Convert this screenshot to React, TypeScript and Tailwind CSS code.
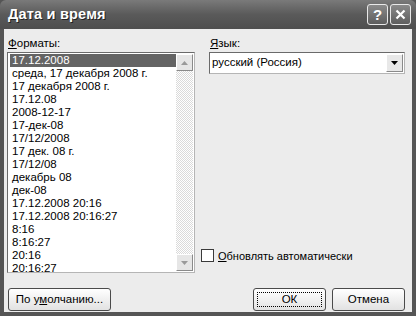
import React from "react";

const FORMATS = [
  "17.12.2008",
  "среда, 17 декабря 2008 г.",
  "17 декабря 2008 г.",
  "17.12.08",
  "2008-12-17",
  "17-дек-08",
  "17/12/2008",
  "17 дек. 08 г.",
  "17/12/08",
  "декабрь 08",
  "дек-08",
  "17.12.2008 20:16",
  "17.12.2008 20:16:27",
  "8:16",
  "8:16:27",
  "20:16",
  "20:16:27",
];

function ScrollButton({ up }: { up?: boolean }) {
  return (
    <div className="h-[17px] w-[17px] shrink-0 flex items-center justify-center bg-[#e6e6e6] border border-t-white border-l-white border-b-[#8a8a8a] border-r-[#8a8a8a]">
      <svg width="7" height="4" viewBox="0 0 7 4">
        <path d={up ? "M0 4 L3.5 0 L7 4 Z" : "M0 0 L3.5 4 L7 0 Z"} fill="#9a9a9a" />
      </svg>
    </div>
  );
}

function Button({
  children,
  width,
  focused,
}: {
  children: React.ReactNode;
  width: string;
  focused?: boolean;
}) {
  return (
    <div
      className={`${width} h-[23px] rounded-[3px] border border-[#4a4a4a] bg-gradient-to-b from-white to-[#e2e2e2] flex items-center justify-center p-[3px] text-[11.5px]`}
    >
      <div
        className={`w-full h-full flex items-center justify-center ${
          focused ? "border border-dotted border-black" : ""
        }`}
      >
        {children}
      </div>
    </div>
  );
}

export default function App() {
  return (
    <div
      className="w-[416px] h-[316px] flex flex-col bg-[#555555] text-[11.5px] text-black"
      style={{ fontFamily: '"Liberation Sans", Arial, sans-serif' }}
    >
      {/* Title bar */}
      <div className="h-[29px] shrink-0 flex items-center justify-between pl-[8px] pr-[5px] bg-gradient-to-b from-[#7a7a7a] via-[#5a5a5a] to-[#4e4e4e] rounded-t-[6px]">
        <span className="text-white font-bold text-[14.5px] tracking-[0.2px] [text-shadow:1px_1px_0_#222]">
          Дата и время
        </span>
        <div className="flex gap-[2px]">
          <div className="w-[21px] h-[21px] rounded-[3px] border border-[#e8e8e8] bg-gradient-to-b from-[#8a8a8a] to-[#5e5e5e] flex items-center justify-center text-white font-bold text-[15px] leading-none">
            ?
          </div>
          <div className="w-[21px] h-[21px] rounded-[3px] border border-[#e8e8e8] bg-gradient-to-b from-[#8a8a8a] to-[#5e5e5e] flex items-center justify-center">
            <svg width="11" height="11" viewBox="0 0 11 11">
              <path d="M1.5 1.5 L9.5 9.5 M9.5 1.5 L1.5 9.5" stroke="white" strokeWidth="2.2" />
            </svg>
          </div>
        </div>
      </div>

      {/* Body */}
      <div className="flex-1 mx-[4px] mb-[4px] bg-[#ececec] flex flex-col pt-[8px] pl-[3px] pr-[7px]">
        <div className="flex gap-[6px] h-[236px]">
          {/* Left: formats */}
          <div className="w-[188px] flex flex-col">
            <div className="h-[13px] leading-[13px] pl-[1px] mb-[2px]">
              <span className="underline">Ф</span>орматы:
            </div>
            <div className="h-[221px] flex border border-t-[#6a6a6a] border-l-[#6a6a6a] border-b-[#b5b5b5] border-r-[#b5b5b5] bg-white p-[1px]">
              <div className="flex-1 flex flex-col pl-[1px]">
                {FORMATS.map((f, i) => (
                  <div
                    key={f}
                    className={`h-[13px] leading-[13px] pl-[2px] whitespace-nowrap ${
                      i === 0 ? "bg-[#646464] text-white" : ""
                    }`}
                  >
                    {f}
                  </div>
                ))}
              </div>
              <div className="w-[17px] flex flex-col bg-[repeating-conic-gradient(#ffffff_0_25%,#dadada_0_50%)] bg-[length:2px_2px]">
                <ScrollButton up />
                <div className="flex-1" />
                <ScrollButton />
              </div>
            </div>
          </div>

          {/* Right: language */}
          <div className="flex-1 flex flex-col">
            <div className="h-[13px] leading-[13px] pl-[9px] mb-[2px]">
              <span className="underline">Я</span>зык:
            </div>
            <div className="ml-[8px] h-[22px] flex items-center border border-t-[#6a6a6a] border-l-[#6a6a6a] border-b-[#b5b5b5] border-r-[#b5b5b5] bg-white p-[1px]">
              <span className="flex-1 pl-[1px]">русский (Россия)</span>
              <div className="w-[17px] h-[18px] flex items-center justify-center bg-[#e8e8e8] border border-t-white border-l-white border-b-[#8a8a8a] border-r-[#8a8a8a]">
                <svg width="7" height="4" viewBox="0 0 7 4">
                  <path d="M0 0 L3.5 4 L7 0 Z" fill="#000" />
                </svg>
              </div>
            </div>
            <div className="flex-1" />
            <div className="flex items-center gap-[4px] mb-[9px]">
              <div className="w-[13px] h-[13px] bg-white border border-[#3a3a3a]" />
              <span className="text-[11px]">
                <span className="underline">О</span>бновлять автоматически
              </span>
            </div>
          </div>
        </div>

        {/* Buttons */}
        <div className="flex items-center mt-[15px] pl-[1px]">
          <Button width="w-[103px]">
            <span>
              По у<span className="underline">м</span>олчанию...
            </span>
          </Button>
          <div className="flex-1" />
          <Button width="w-[73px]" focused>
            <span>ОК</span>
          </Button>
          <div className="w-[6px]" />
          <Button width="w-[73px]">
            <span>Отмена</span>
          </Button>
        </div>
      </div>
    </div>
  );
}
